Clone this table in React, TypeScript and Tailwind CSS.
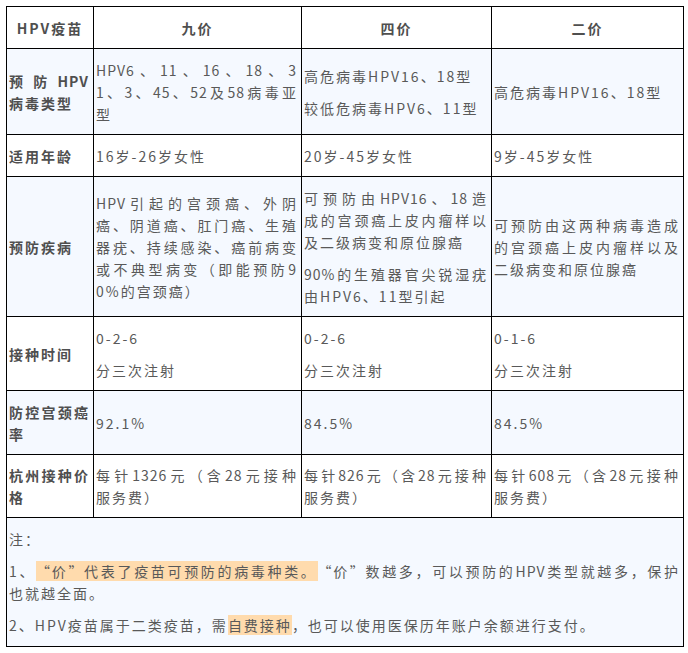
import React from "react";

const cell = "border border-black pl-[2px] pr-[4px] align-middle";
const head = "border border-black pl-[2px] pr-[2px] align-middle text-center font-bold text-[#4f4f4f]";
const first = "border border-black pl-[2px] pr-[4px] align-middle font-bold text-[#4f4f4f]";

function J({ children }: { children: React.ReactNode }) {
  return <div className="text-justify [text-align-last:justify] tracking-[1px]">{children}</div>;
}
function L({ children }: { children: React.ReactNode }) {
  return <div>{children}</div>;
}
function P({ children }: { children: React.ReactNode }) {
  return <div className="mt-[10px] first:mt-0">{children}</div>;
}
function QO() {
  return <span className="inline-block w-[14px] text-right tracking-normal">“</span>;
}
function QC() {
  return <span className="inline-block w-[14px] text-left tracking-normal">”</span>;
}

export default function App() {
  return (
    <div className="min-h-screen bg-white pl-[6px] pt-[6px] font-['Noto_Sans_CJK_SC','Noto_Sans',sans-serif] text-[14px] leading-[22px] tracking-[2px] text-[#595959]">
      <table className="w-[677px] table-fixed border-collapse border border-black">
        <colgroup>
          <col className="w-[87px]" />
          <col className="w-[208px]" />
          <col className="w-[190px]" />
          <col className="w-[192px]" />
        </colgroup>
        <tbody>
          <tr className="h-[42px] bg-white">
            <td className={head}>HPV疫苗</td>
            <td className={head}>九价</td>
            <td className={head}>四价</td>
            <td className={head}>二价</td>
          </tr>
          <tr className="h-[86px] bg-[#f5f9ff]">
            <td className={first}>
              <J>预防HPV</J>
              <L>病毒类型</L>
            </td>
            <td className={cell}>
              <J>HPV6、11、16、18、3</J>
              <J>1、3、45、52及58病毒亚</J>
              <L>型</L>
            </td>
            <td className={cell}>
              <P>高危病毒HPV16、18型</P>
              <P>较低危病毒HPV6、11型</P>
            </td>
            <td className={cell}>
              <L>高危病毒HPV16、18型</L>
            </td>
          </tr>
          <tr className="h-[42px] bg-white">
            <td className={first}>适用年龄</td>
            <td className={cell}>16岁-26岁女性</td>
            <td className={cell}>20岁-45岁女性</td>
            <td className={cell}>9岁-45岁女性</td>
          </tr>
          <tr className="h-[140px] bg-[#f5f9ff]">
            <td className={first}>预防疾病</td>
            <td className={cell}>
              <J>HPV引起的宫颈癌、外阴</J>
              <J>癌、阴道癌、肛门癌、生殖</J>
              <J>器疣、持续感染、癌前病变</J>
              <J>或不典型病变（即能预防9</J>
              <L>0%的宫颈癌）</L>
            </td>
            <td className={cell}>
              <P>
                <J>可预防由HPV16、18造</J>
                <J>成的宫颈癌上皮内瘤样以</J>
                <L>及二级病变和原位腺癌</L>
              </P>
              <P>
                <J>90%的生殖器官尖锐湿疣</J>
                <L>由HPV6、11型引起</L>
              </P>
            </td>
            <td className={cell}>
              <J>可预防由这两种病毒造成</J>
              <J>的宫颈癌上皮内瘤样以及</J>
              <L>二级病变和原位腺癌</L>
            </td>
          </tr>
          <tr className="h-[74px] bg-white">
            <td className={first}>接种时间</td>
            <td className={cell}>
              <P>0-2-6</P>
              <P>分三次注射</P>
            </td>
            <td className={cell}>
              <P>0-2-6</P>
              <P>分三次注射</P>
            </td>
            <td className={cell}>
              <P>0-1-6</P>
              <P>分三次注射</P>
            </td>
          </tr>
          <tr className="h-[64px] bg-[#f5f9ff]">
            <td className={first}>
              <J>防控宫颈癌</J>
              <L>率</L>
            </td>
            <td className={cell}>92.1%</td>
            <td className={cell}>84.5%</td>
            <td className={cell}>84.5%</td>
          </tr>
          <tr className="h-[63px] bg-white">
            <td className={first}>
              <J>杭州接种价</J>
              <L>格</L>
            </td>
            <td className={cell}>
              <J>每针1326元（含28元接种</J>
              <L>服务费）</L>
            </td>
            <td className={cell}>
              <J>每针826元（含28元接种</J>
              <L>服务费）</L>
            </td>
            <td className={cell}>
              <J>每针608元（含28元接种</J>
              <L>服务费）</L>
            </td>
          </tr>
          <tr className="h-[129px] bg-[#f5f9ff]">
            <td colSpan={4} className={cell}>
              <P>注：</P>
              <P>
                <div className="text-justify [text-align-last:justify] tracking-[1px]">
                  1、<span className="bg-[#ffdbad]"><QO />价<QC />代表了疫苗可预防的病毒种类。</span><QO />价<QC />数越多，可以预防的HPV类型就越多，保护
                </div>
                <L>也就越全面。</L>
              </P>
              <P>
                2、HPV疫苗属于二类疫苗，需<span className="bg-[#ffdbad]">自费接种</span>，也可以使用医保历年账户余额进行支付。
              </P>
            </td>
          </tr>
        </tbody>
      </table>
    </div>
  );
}
